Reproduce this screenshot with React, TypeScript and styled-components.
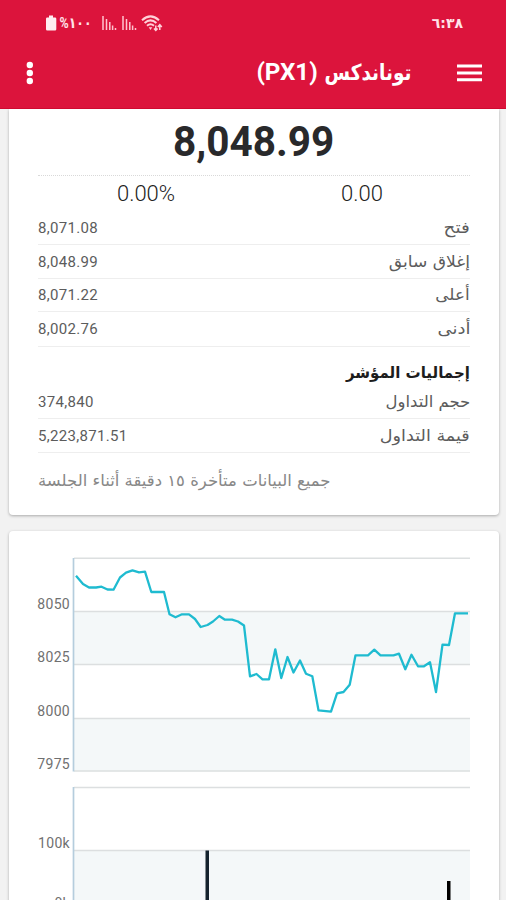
import React from "react";
import styled, { createGlobalStyle } from "styled-components";

const Global = createGlobalStyle`
  * { box-sizing: border-box; }
  html, body { margin: 0; padding: 0; overflow: hidden; background: #f2f2f2; }
  body { font-family: Roboto, "DejaVu Sans", sans-serif; }
`;

const Screen = styled.div`
  width: 506px;
  height: 900px;
  overflow: hidden;
  background: #f2f2f2;
`;

const Header = styled.header`
  height: 109px;
  background: #dc143c;
  color: #fff;
  border-bottom: 1px solid #cf0a30;
`;

const StatusBar = styled.div`
  height: 46px;
  padding: 0 43px 0 45px;
  display: flex;
  align-items: center;
  justify-content: space-between;
`;

const StatusIcons = styled.div`
  display: flex;
  align-items: center;
  height: 46px;
`;

const Stretch = styled.span<{ $x: number; $from?: string }>`
  display: inline-block;
  white-space: nowrap;
  transform: scaleX(${(p) => p.$x});
  transform-origin: ${(p) => p.$from ?? "right"} center;
`;

const Percent = styled.span`
  display: block;
  width: 33px;
  margin: 0 5px 0 2px;
  font: bold 15px/20px Roboto, "DejaVu Sans", sans-serif;
  color: #ffe3e8;
  direction: rtl;
  white-space: nowrap;
`;

const Clock = styled.span`
  font: bold 14px/20px "DejaVu Sans", sans-serif;
  color: #ffe3e8;
`;

const Toolbar = styled.div`
  height: 54px;
  padding: 0 24px 0 25px;
  display: flex;
  align-items: center;
`;

const Title = styled.h1`
  flex: 1;
  margin: 0 46px 1px 0;
  font: bold 24px/34px Roboto, "DejaVu Sans", sans-serif;
  direction: rtl;
  text-align: right;
  display: flex;
  align-items: baseline;
  gap: 6px;
`;

const TitleWord = styled.span<{ $w: number; $size?: number }>`
  width: ${(p) => p.$w}px;
  font-size: ${(p) => p.$size ?? 24}px;
  white-space: nowrap;
`;

const Card = styled.section<{ $h: number; $first?: boolean }>`
  height: ${(p) => p.$h}px;
  margin: 0 7px 16px 9px;
  padding: 0 29px;
  background: #fff;
  border-radius: ${(p) => (p.$first ? "0 0 4px 4px" : "4px")};
  box-shadow: 0 1px 3px rgba(0, 0, 0, 0.3);
  overflow: hidden;
`;

const Cards = styled.main`
  height: 791px;
  overflow: hidden;
`;

const Price = styled.div`
  height: 67px;
  padding-top: 9px;
  border-bottom: 1px dotted #d9d9d9;
  text-align: center;
  font-size: 42px;
  line-height: 48px;
  font-weight: 700;
  color: #29292b;
`;

const Changes = styled.div`
  height: 35px;
  display: grid;
  grid-template-columns: 1fr 1fr;
  text-align: center;
  font-size: 22px;
  line-height: 35px;
  font-weight: 300;
  color: #222;
`;

const Row = styled.div<{ $h?: number }>`
  height: ${(p) => p.$h ?? 34}px;
  display: flex;
  align-items: center;
  justify-content: space-between;
  border-bottom: 1px solid #eee;
  color: #5c5c5c;
`;

const Value = styled.span`
  font-size: 15px;
  letter-spacing: 0.32px;
`;

const Label = styled.span`
  font: 16px/24px "DejaVu Sans", sans-serif;
  direction: rtl;
`;

const SectionTitle = styled.h2`
  height: 38px;
  margin: 0;
  padding-top: 14px;
  font: bold 16px/24px "DejaVu Sans", sans-serif;
  color: #1d1d1d;
  direction: rtl;
`;

const Note = styled.p`
  margin: 16px 0 0;
  font: 16px/24px "DejaVu Sans", sans-serif;
  color: #888;
  text-align: left;
  direction: rtl;
`;

const ChartSvg = styled.svg`
  display: block;
  overflow: visible;
`;

const rows = [
  { label: "فتح", value: "8,071.08", scale: 1.15, h: 34 },
  { label: "إغلاق سابق", value: "8,048.99", scale: 1.07, h: 34 },
  { label: "أعلى", value: "8,071.22", scale: 1.05, h: 33 },
  { label: "أدنى", value: "8,002.76", scale: 1.12, h: 35 },
];

const totals = [
  { label: "حجم التداول", value: "374,840", scale: 1.03, h: 34 },
  { label: "قيمة التداول", value: "5,223,871.51", scale: 1.1, h: 34 },
];

const price =
  "76,575.7 83,584 89,587.5 96,587.5 101.5,586.7 107.5,589.5 113.5,589.7 120,577.5 126,572.7 132.5,570.3 139,572.3 145,571.7 151.3,592 164,592 169.5,614.3 175.5,617.3 182,614.3 189,614.3 195,619 200.7,627 207.5,625 213,621.5 219.3,616 225,619.7 232,619.7 238,621.5 244,625.5 250,676.3 256.5,674 262.5,679.3 269,679.3 275.3,649.3 281.3,678 287.5,657 293.5,672.5 300,660.5 306,673.7 312.3,676.3 318.5,710.3 331,711.7 337,693.3 343.5,692 349.7,684.7 355.5,655.3 368,655.3 374.3,649.7 380.5,655.3 393.5,655.3 399,653.7 405.3,669.3 411.5,654.7 418,666.3 424,666.3 430,662.3 436,692 442.5,644.7 449,645 455,613.3 468,613.3";

const axisLabels: [string, number][] = [
  ["8050", 608.5],
  ["8025", 661.5],
  ["8000", 715.5],
  ["7975", 768.5],
  ["100k", 847.5],
  ["0k", 908],
];

const Battery = () => (
  <svg width="12" height="16" viewBox="0 0 12 16" fill="#ffeef1">
    <path d="M4 0.5h4v2h2a1.3 1.3 0 0 1 1.3 1.3v10.4a1.3 1.3 0 0 1-1.3 1.3H2.3A1.3 1.3 0 0 1 1 14.200V3.800a1.300 1.300 0 0 1 1.300-1.300H4z" />
  </svg>
);

const Signal = () => (
  <svg width="20" height="16" viewBox="0 0 20 16" stroke="#ffc4ce" strokeWidth="1.500">
    <path d="M2 1v14M5.500 4V15M8.800 7V15M11.600 10.500V15M14.500 13V15" />
  </svg>
);

const Wifi = () => (
  <svg width="22" height="17" viewBox="0 0 22 17" fill="none" stroke="#ffd0d8" strokeWidth="2">
    <path d="M1 5.200Q9.500-2.500 18 5.200M3.600 8Q9.500 2.700 15.400 8M6 10.700Q9.500 7.700 13 10.700" />
    <path d="M7.700 12.200h3.600l-1.800 2.800z" fill="#ffd0d8" stroke="none" />
    <path d="M14.800 10.500v5M13 13.500l1.800 2 1.800-2M18.800 15V9.700M16.800 12l2-2.300 2 2.300" strokeWidth="1.500" />
  </svg>
);

const Chart = () => (
  <ChartSvg width="432" height="369" viewBox="38 531 432 369">
    <rect x="74" y="611" width="396" height="53" fill="#f4f8f9" />
    <rect x="74" y="718" width="396" height="53" fill="#f4f8f9" />
    <rect x="74" y="850" width="396" height="50" fill="#f4f8f9" />
    <path
      d="M74 558.300H470M74 611.500H470M74 664.500H470M74 718.500H470M74 771H470M74 787.500H470M74 850.500H470"
      stroke="#dcdfe0"
      strokeWidth="1.500"
    />
    <path d="M73.500 558V771.500M73.500 787V900" stroke="#b5cddd" strokeWidth="1.700" />
    {axisLabels.map(([t, y]) => (
      <text key={t} x="70" y={y} textAnchor="end" fontSize="14" letterSpacing="0.300" fill="#707070">
        {t}
      </text>
    ))}
    <polyline points={price} fill="none" stroke="#1fbbd0" strokeWidth="2.300" strokeLinejoin="round" />
    <rect x="205.500" y="850.500" width="3.500" height="50" fill="#14232d" />
    <rect x="447" y="881" width="3.500" height="20" fill="#000" />
  </ChartSvg>
);

export default function App() {
  return (
    <Screen>
      <Global />
      <Header>
        <StatusBar>
          <StatusIcons>
            <Battery />
            <Percent>
              <Stretch $x={0.83}>١٠٠%</Stretch>
            </Percent>
            <svg width="4" height="1" />
            <Signal />
            <Signal />
            <Wifi />
          </StatusIcons>
          <Clock>
            <Stretch $x={1}>٦:٣٨</Stretch>
          </Clock>
        </StatusBar>
        <Toolbar>
          <svg width="10" height="24" viewBox="0 0 10 24" fill="#fff">
            <circle cx="4.800" cy="4" r="3.200" />
            <circle cx="4.800" cy="12" r="3.200" />
            <circle cx="4.800" cy="20" r="3.200" />
          </svg>
          <Title>
            <TitleWord $w={87} $size={22}>
              <Stretch $x={0.84}>توناندكس</Stretch>
            </TitleWord>
            <TitleWord $w={62}>
              <Stretch $x={1.01}>(PX1)</Stretch>
            </TitleWord>
          </Title>
          <svg width="25" height="18" viewBox="0 0 25 18" fill="#fff">
            <path d="M0 0.500h25v3H0zM0 7.400h25v3H0zM0 14.300h25v3H0z" />
          </svg>
        </Toolbar>
      </Header>
      <Cards>
        <Card $h={406} $first>
          <Price>
            <Stretch $x={0.965} $from="center">8,048.99</Stretch>
          </Price>
          <Changes>
            <span>0.00%</span>
            <span>0.00</span>
          </Changes>
          {rows.map((r) => (
            <Row key={r.label} $h={r.h}>
              <Value>{r.value}</Value>
              <Label>
                <Stretch $x={r.scale}>{r.label}</Stretch>
              </Label>
            </Row>
          ))}
          <SectionTitle>
            <Stretch $x={0.94}>إجماليات المؤشر</Stretch>
          </SectionTitle>
          {totals.map((r) => (
            <Row key={r.label} $h={r.h}>
              <Value>{r.value}</Value>
              <Label>
                <Stretch $x={r.scale}>{r.label}</Stretch>
              </Label>
            </Row>
          ))}
          <Note>
            <Stretch $x={1.03} $from="left">
              جميع البيانات متأخرة ١٥ دقيقة أثناء الجلسة
            </Stretch>
          </Note>
        </Card>
        <Card $h={380}>
          <Chart />
        </Card>
      </Cards>
    </Screen>
  );
}
